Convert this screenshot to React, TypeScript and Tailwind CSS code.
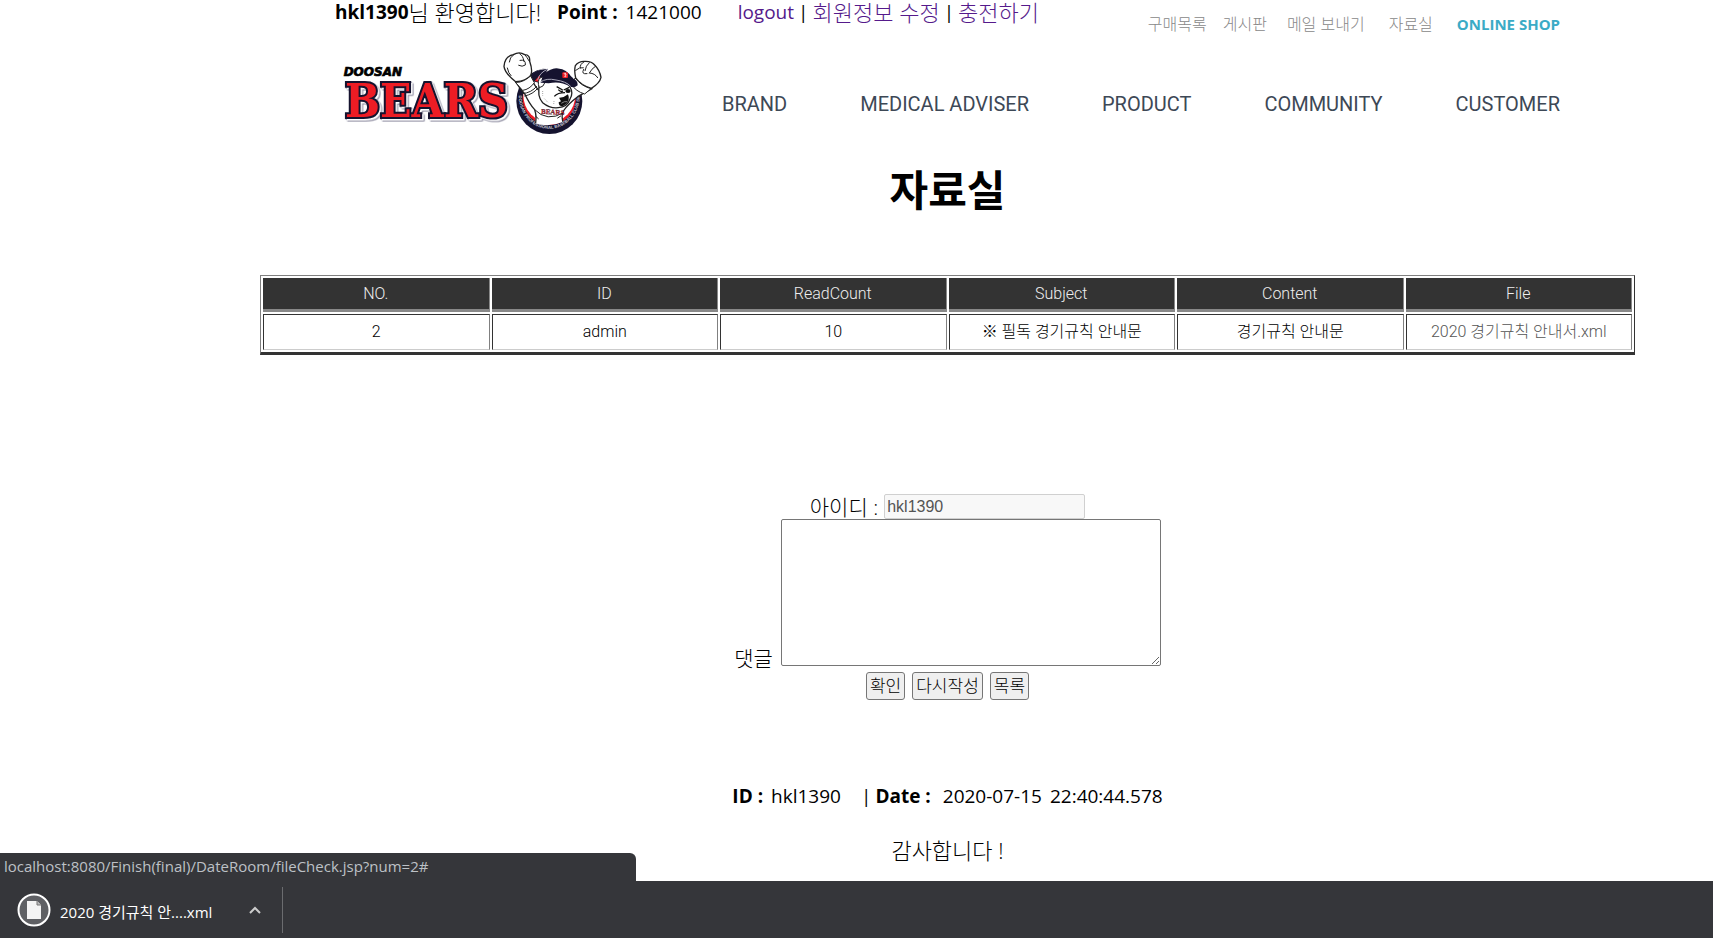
import React from "react";

const headings = ["NO.", "ID", "ReadCount", "Subject", "Content", "File"];
const row = ["2", "admin", "10", "※ 필독 경기규칙 안내문", "경기규칙 안내문"];
const sections = ["BRAND", "MEDICAL ADVISER", "PRODUCT", "COMMUNITY", "CUSTOMER"];

function Logo() {
  return (
    <svg viewBox="60 141 810 270" className="h-[90px] w-[270px] overflow-visible" role="img" aria-label="Doosan Bears">
      <defs>
        <path id="ring" d="M599 284 A90 98 0 0 0 782 284" />
      </defs>
      <text x="74" y="224" fontFamily="DejaVu Sans" fontWeight="bold" fontStyle="italic" fontSize="36" fill="#000" stroke="#000" strokeWidth="2">
        DOOSAN
      </text>
      <text
        x="78"
        y="348"
        fontFamily="DejaVu Serif Condensed, DejaVu Serif"
        fontWeight="bold"
        fontSize="138"
        fill="#ed1c24"
        stroke="#15132f"
        strokeWidth="12"
        strokeLinejoin="miter"
        strokeMiterlimit="3"
        className="[filter:drop-shadow(5px_5px_0_#fff)_drop-shadow(2px_2px_0_#66647f)] [paint-order:stroke]"
      >
        BEARS
      </text>

      <circle cx="691" cy="300" r="99" fill="#15132f" />
      <circle cx="691" cy="292" r="80" fill="#ed1c24" />
      <ellipse cx="691" cy="282" rx="78" ry="82" fill="#fff" />
      <path d="M627 238 Q640 204 687 204 L664 246Z" fill="#15132f" />
      <path d="M647 240 L662 223 664 244Z" fill="#ed1c24" />
      <text fontFamily="Liberation Sans" fontWeight="bold" fontSize="13" fill="#c8c8d6">
        <textPath href="#ring">DOOSAN PROFESSIONAL BASEBALL CLUB SINCE</textPath>
      </text>

      <g fill="#fff" stroke="#222" strokeWidth="4" strokeLinejoin="round" strokeLinecap="round">
        <path d="M592 244 L616 277 Q629 307 647 326 Q652 345 648 367 Q690 380 731 363 Q726 348 734 328 Q758 302 778 286 L819 263 L766 232 L660 285 L636 224Z" stroke="none" />
        <path d="M591 243 Q602 264 617 278 Q631 308 647 326 Q653 343 650 365 M635 224 Q640 245 657 266 M819 263 Q797 275 776 287 Q747 309 733 330 Q727 342 731 360" fill="none" />
        <path d="M590 242 Q557 216 555 196 Q557 166 583 161 Q601 150 617 161 Q634 161 632 181 Q642 210 635 223 Q622 240 590 242Z" />
        <path d="M583 162 Q572 169 571 183 M602 158 Q612 163 615 181 M617 160 Q624 169 631 181 M603 178 Q621 174 619 192 Q610 199 599 193 M565 201 Q568 217 576 224" fill="none" strokeWidth="3" />
        <path d="M770 231 Q765 208 769 194 Q779 180 797 181 Q818 180 827 192 Q842 207 846 229 Q842 247 817 262 Q787 255 770 231Z" />
        <path d="M770 208 Q782 197 793 200 M796 182 Q781 190 784 201 M811 185 Q800 194 798 209 M829 196 Q818 203 811 216 M794 205 Q785 221 804 218 M812 216 Q828 217 836 230" fill="none" strokeWidth="3" />
        <path d="M590 244 Q609 247 635 225 L646 245 Q632 265 612 268Z M769 232 Q788 256 816 263 L797 279 Q770 271 758 251Z" strokeWidth="3" />
        <path d="M611 278 Q638 275 653 256 M617 285 Q642 280 656 262 M647 326 Q684 365 734 335 M650 346 L658 353 M725 345 L716 351" fill="none" strokeWidth="3" />
        <path d="M662 246 Q653 286 671 305 Q693 323 718 320 Q745 318 753 294 Q764 276 753 258 Q746 236 718 235Z" />
        <path d="M658 249 Q656 231 670 228 Q679 232 678 244 Q674 258 662 260Z" strokeWidth="3" />
      </g>
      <path d="M666 245 Q671 206 713 202 Q750 206 758 232 Q777 237 776 253 Q765 263 752 256 Q723 239 689 247Z" fill="#15132f" />
      <path d="M656 237 Q661 215 687 204 M663 244 Q682 230 711 237 Q741 241 755 256" stroke="#aaa9bb" strokeWidth="3" fill="none" />
      <rect x="730" y="214" width="17" height="17" rx="3" fill="#ed1c24" />
      <path d="M734 217 H741 L737 221 H742 L737 227 H742" stroke="#fff" strokeWidth="2" fill="none" />
      <path d="M713 257 L731 267 M751 259 L734 267 M718 266 Q725 274 732 270 M706 286 Q716 275 738 275" stroke="#111" strokeWidth="4" fill="none" />
      <ellipse cx="747" cy="270" rx="8" ry="6" fill="#111" />
      <path d="M720 290 Q734 291 747 280 Q756 300 736 313 Q720 321 719 304 L726 301Z" fill="#111" />
      <path d="M727 307 Q736 300 744 302" stroke="#888" strokeWidth="3" fill="none" />
      <text x="666" y="338" fontFamily="Liberation Serif" fontWeight="bold" fontSize="21" fill="#ed1c24" stroke="#15132f" strokeWidth=".8" transform="rotate(3 666 338)">BEARS</text>
      <path d="M671 270 V284 M676 293 L688 305 M705 300 L704 311" stroke="#777" strokeWidth="2" strokeDasharray="3 3" />
    </svg>
  );
}

export default function App() {
  return (
    <div className="flex min-h-screen flex-col bg-white font-['Open_Sans','Noto_Sans_CJK_KR',sans-serif] text-[19px] leading-6 text-black">
      <div className="flex-1 pr-[78px] pl-[260px]">
        <header className="px-[75px]">
          <div className="flex items-start justify-between whitespace-nowrap">
            <div className="flex">
              <p className="flex">
                <b>hkl1390</b>
                <span className="text-[22px] font-light">님 환영합니다!</span>
              </p>
              <p className="ml-4 flex gap-2">
                <b>Point :</b> 1421000
              </p>
              <nav aria-label="Account" className="ml-9 flex gap-1 text-[#551a8b]">
                <a href="#logout">logout</a>
                <span className="text-black">|</span>
                <a href="#profile" className="text-[22px] font-light">회원정보 수정</a>
                <span className="text-black">|</span>
                <a href="#charge" className="text-[22px] font-light">충전하기</a>
              </nav>
            </div>
            <nav aria-label="Shortcuts" className="flex pt-3 text-[16px] font-light text-[#888]">
              <a href="#orders">구매목록</a>
              <a href="#board" className="ml-4">게시판</a>
              <a href="#mail" className="ml-5">메일 보내기</a>
              <a href="#files" className="ml-6">자료실</a>
              <a href="#shop" className="ml-6 text-[15px] font-bold text-[#3babc6]">ONLINE SHOP</a>
            </nav>
          </div>
          <div className="mt-3 flex justify-between pl-1">
            <a href="#home"><Logo /></a>
            <nav aria-label="Main" className="flex w-[838px] justify-between pt-11 font-['Roboto',sans-serif] text-[20px] text-[#3d4856]">
              {sections.map((s) => (
                <a key={s} href="#section">{s}</a>
              ))}
            </nav>
          </div>
        </header>

        <h1 className="mt-6 text-center text-[42px] leading-[56px] font-bold">자료실</h1>

        <table className="mt-[57px] w-full table-fixed border-separate border-spacing-[2px] border border-b-[3px] border-t-[#808080] border-r-[#333] border-b-[#333] border-l-[#808080] text-center font-['Roboto','Noto_Sans_CJK_KR',sans-serif] text-[16px]">
          <thead>
            <tr>
              {headings.map((h) => (
                <th key={h} className="h-[34px] border-r border-b-[3px] border-[#888] bg-[#333] p-0 font-light text-[#eee]">{h}</th>
              ))}
            </tr>
          </thead>
          <tbody className="font-light">
            <tr>
              {row.map((c) => (
                <td key={c} className="h-9 border border-t-[#333] border-r-[#808080] border-b-[#ccc] border-l-[#333] p-0">{c}</td>
              ))}
              <td className="h-9 border border-t-[#333] border-r-[#808080] border-b-[#ccc] border-l-[#333] p-0">
                <a href="#download" className="text-[#555]">2020 경기규칙 안내서.xml</a>
              </td>
            </tr>
          </tbody>
        </table>

        <form className="mt-[139px] flex flex-col items-center" onSubmit={(e) => e.preventDefault()}>
          <div className="flex items-center gap-[6px]">
            <label htmlFor="user" className="text-[21px] font-light">아이디 :</label>
            <input id="user" disabled defaultValue="hkl1390" className="h-[25px] w-[201px] rounded-xs border border-[#d0d0d0] bg-[#f8f8f8] px-[2px] font-['Liberation_Sans',sans-serif] text-[16px] text-[#545454]" />
          </div>
          <div className="flex items-end gap-2">
            <label htmlFor="reply" className="text-[21px] leading-4 font-light">댓글</label>
            <textarea id="reply" className="h-[147px] w-[380px] rounded-xs border border-[#767676] bg-white" />
          </div>
          <div className="mt-[6px] flex gap-[7px] text-[17px] font-light">
            <button type="submit" className="h-7 rounded-[3px] border border-[#767676] bg-[#efefef] px-[3px]">확인</button>
            <button type="reset" className="h-7 rounded-[3px] border border-[#767676] bg-[#efefef] px-[3px]">다시작성</button>
            <button type="button" className="h-7 rounded-[3px] border border-[#767676] bg-[#efefef] px-[3px]">목록</button>
          </div>
        </form>

        <section className="mt-[84px] flex flex-col items-center">
          <p className="flex">
            <span className="flex gap-2"><b>ID :</b> hkl1390</span>
            <span className="mr-1 ml-5">|</span>
            <b>Date :</b>
            <span className="ml-3 flex gap-2"><span>2020-07-15</span><span>22:40:44.578</span></span>
          </p>
          <p className="mt-[30px] mb-2 text-[22px] font-light">감사합니다 !</p>
        </section>
      </div>

      <footer className="relative flex h-[58px] items-center border-t border-white bg-[#35363a] text-[15px] text-white">
        <div className="absolute bottom-full left-0 h-7 w-[636px] rounded-tr-md bg-[#35363a] pl-1 text-[15px] leading-[26px] text-[#bdc1c6]">
          localhost:8080/Finish(final)/DateRoom/fileCheck.jsp?num=2#
        </div>
        <a href="#download" className="ml-4 flex items-center gap-2">
          <svg viewBox="0 0 36 36" className="size-9" aria-hidden="true">
            <circle cx="18" cy="18" r="15.5" fill="#5f6064" stroke="#fff" strokeWidth="2" />
            <path d="M11 9h10l4 4v14H11z" fill="#f4f4f4" />
            <path d="M21 9v4h4" fill="#bbb" stroke="#777" />
          </svg>
          <span className="pt-1">2020 경기규칙 안....xml</span>
        </a>
        <button type="button" aria-label="Download options" className="ml-9">
          <svg viewBox="0 0 14 14" className="size-[14px]" aria-hidden="true">
            <path d="M2 10l5-5 5 5" fill="none" stroke="#ccc" strokeWidth="2" />
          </svg>
        </button>
        <span className="ml-5 h-[46px] w-px bg-[#6b6c6f]" />
      </footer>
    </div>
  );
}
